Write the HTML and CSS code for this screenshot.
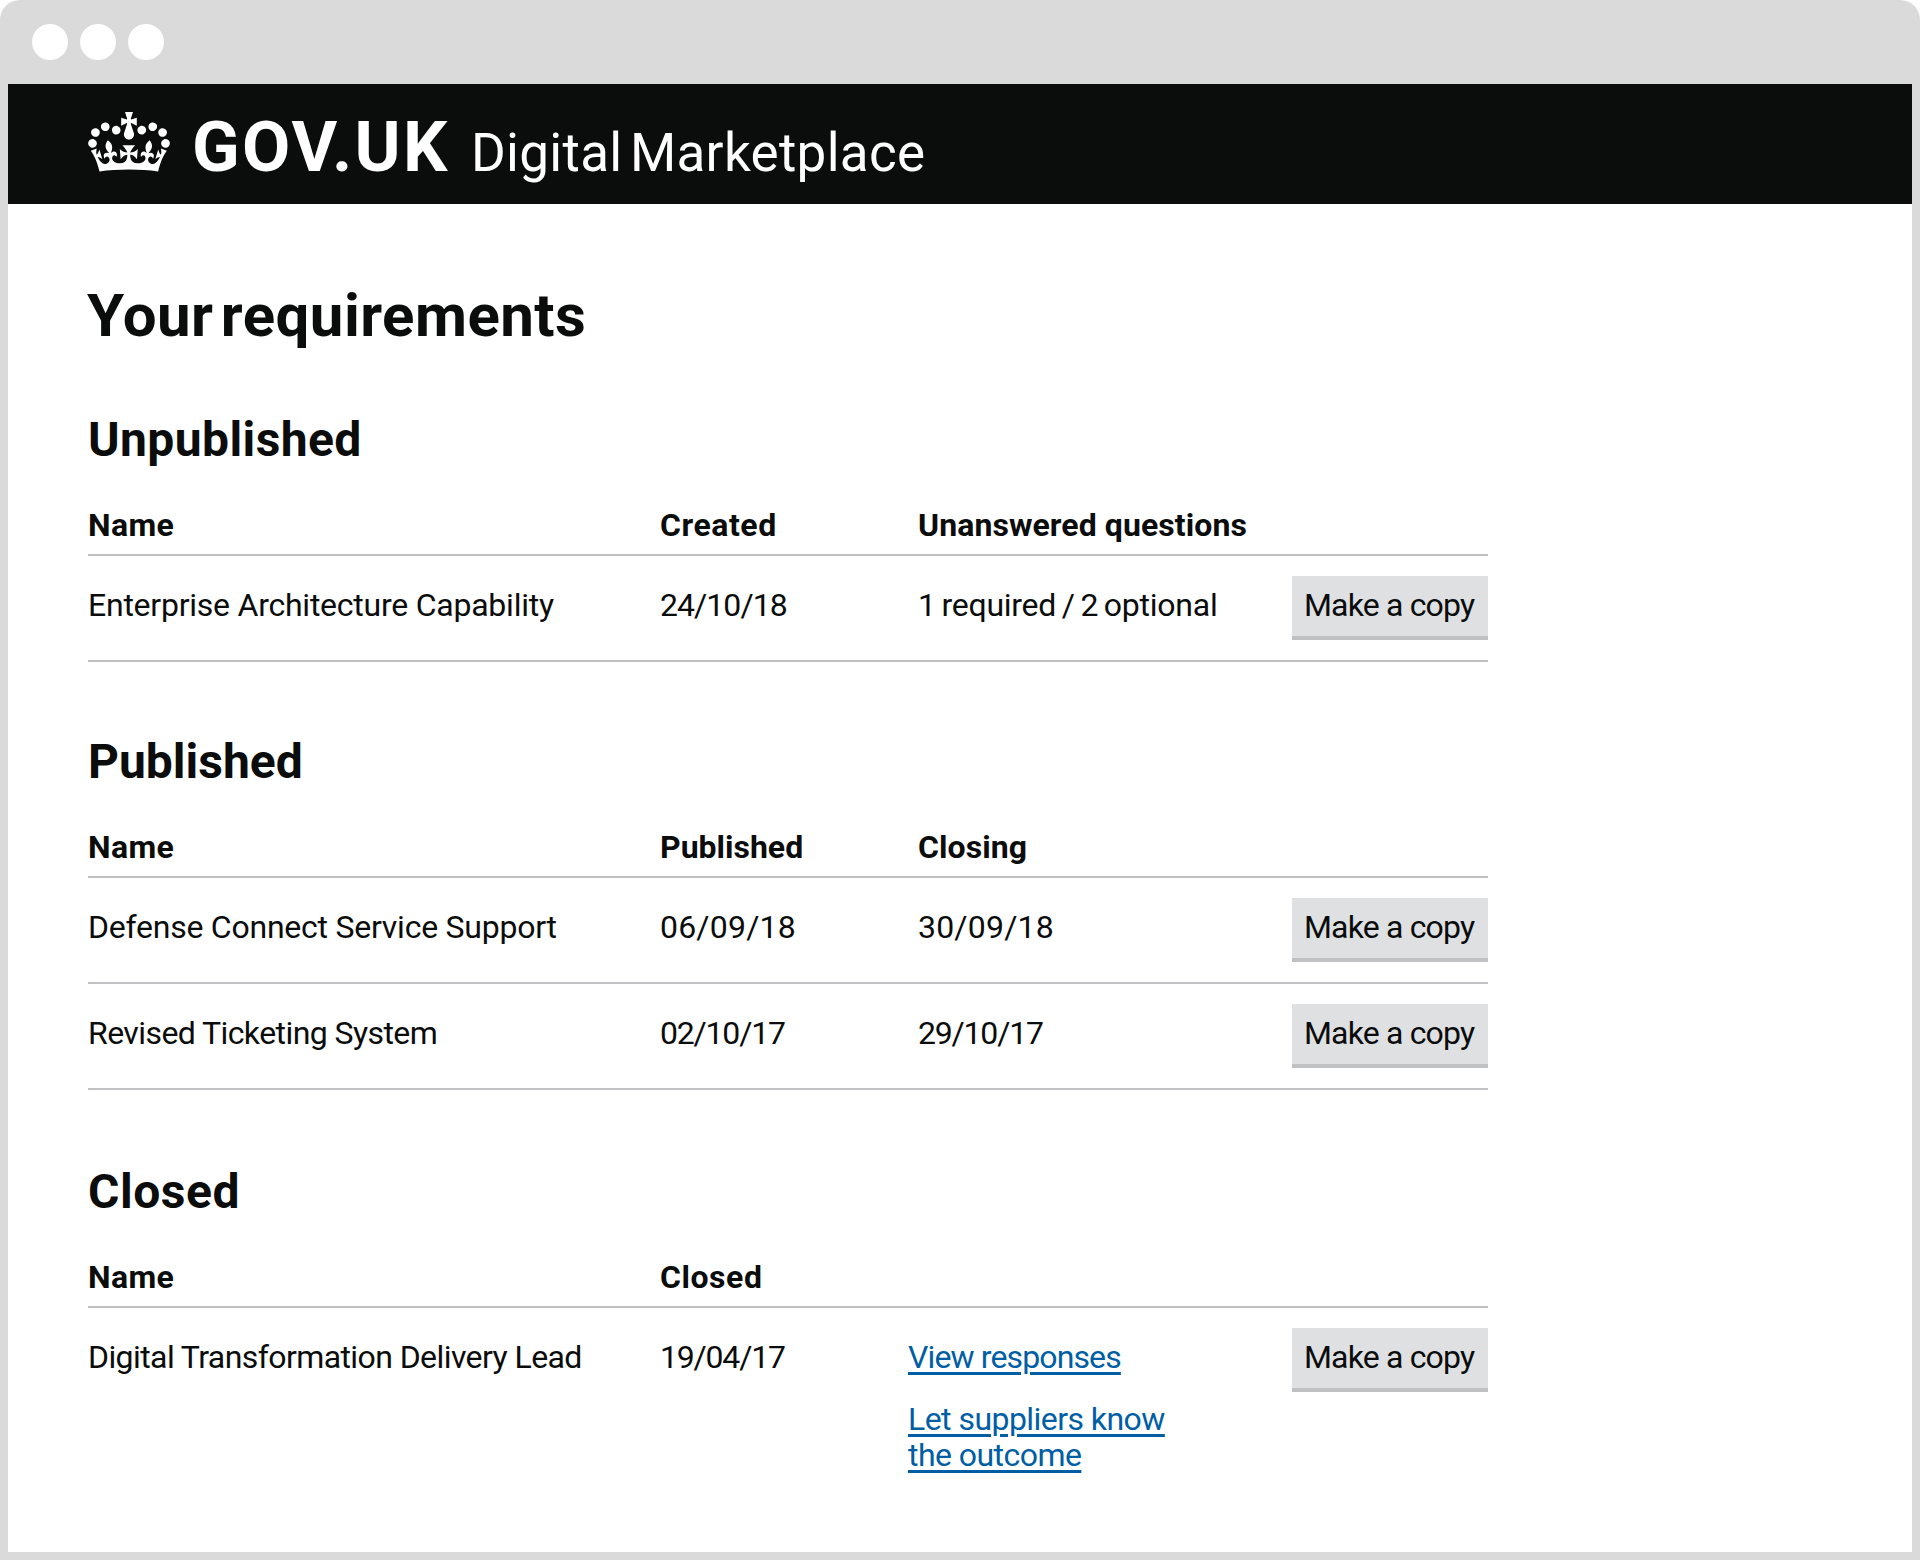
FILE: index.html
```html
<!DOCTYPE html>
<html lang="en">
<head>
<meta charset="utf-8">
<title>Your requirements – Digital Marketplace – GOV.UK</title>
<link rel="stylesheet" href="styles.css">
</head>
<body>
<div class="window">
  <div class="window-bar">
    <span class="window-dot"></span>
    <span class="window-dot"></span>
    <span class="window-dot"></span>
  </div>
  <div class="page">
    <header class="header">
      <svg class="crown" viewBox="0 0 132 97" aria-hidden="true">
        <path fill="currentColor" fill-rule="evenodd" d="M25 30.2c3.5 1.5 7.7-.2 9.1-3.7 1.5-3.6-.2-7.8-3.9-9.2-3.6-1.4-7.6.3-9.1 3.9-1.4 3.5.3 7.5 3.9 9zM9 39.5c3.6 1.5 7.8-.2 9.2-3.7 1.5-3.6-.2-7.8-3.9-9.1-3.6-1.5-7.6.2-9.1 3.8-1.4 3.5.3 7.5 3.8 9zM4.4 57.2c3.5 1.5 7.7-.2 9.1-3.8 1.5-3.6-.2-7.7-3.9-9.1-3.5-1.5-7.6.3-9.1 3.8-1.4 3.5.3 7.6 3.9 9.1zm38.3-21.4c3.5 1.5 7.7-.2 9.1-3.8 1.5-3.6-.2-7.7-3.9-9.1-3.6-1.5-7.6.3-9.1 3.8-1.3 3.6.4 7.7 3.9 9.1zm64.4-5.6c-3.6 1.5-7.8-.2-9.1-3.7-1.5-3.6.2-7.8 3.8-9.2 3.6-1.4 7.7.3 9.2 3.9 1.3 3.5-.4 7.5-3.9 9zm15.9 9.3c-3.6 1.5-7.7-.2-9.1-3.7-1.5-3.6.2-7.8 3.7-9.1 3.6-1.5 7.7.2 9.2 3.8 1.5 3.5-.3 7.5-3.8 9zm4.7 17.7c-3.6 1.5-7.8-.2-9.2-3.8-1.5-3.6.2-7.7 3.9-9.1 3.6-1.5 7.7.3 9.2 3.8 1.3 3.5-.4 7.6-3.9 9.1zM89.3 35.8c-3.6 1.5-7.8-.2-9.2-3.8-1.4-3.6.2-7.7 3.9-9.1 3.6-1.5 7.7.3 9.2 3.8 1.4 3.6-.3 7.7-3.9 9.1zM69.7 17.7l8.9 4.7V9.3l-8.9 2.8c-.2-.3-.5-.6-.9-.9L72.4 0H59.6l3.5 11.2c-.3.3-.6.5-.9.9l-8.8-2.8v13.1l8.8-4.7c.3.3.6.7.9.9l-5 15.4v.1c-.2.8-.4 1.6-.4 2.4 0 4.1 3.1 7.5 7 8.1h.2c.3 0 .7.1 1 .1.4 0 .7 0 1-.1h.2c4-.6 7.1-4.1 7.1-8.1 0-.8-.1-1.7-.4-2.4V34l-5.1-15.4c.4-.2.7-.6 1-.9zM66 92.8c16.9 0 32.8 1.1 47.1 3.2 4-16.9 8.9-26.7 14-33.5l-9.6-3.4c1 4.9 1.1 7.2 0 10.2-1.5-1.4-3-4.3-4.2-8.7L108.6 76c2.8-2 5-3.2 7.5-3.3-4.4 9.4-10 11.9-13.6 11.2-4.3-.8-6.3-4.6-5.6-7.9 1-4.7 5.7-5.9 8-.5 4.3-8.7-3-11.4-7.6-8.8 7.1-7.2 7.9-13.5 2.1-21.1-8 6.1-8.1 12.3-4.5 20.8-4.7-5.4-12.1-2.5-9.5 6.2 3.4-5.2 7.9-2 7.2 3.1-.6 4.3-6.4 7.8-13.5 7.2-10.3-.9-10.9-8-11.2-13.8 2.5-.5 7.1 1.8 11 7.3L80.2 60c-4.1 4.4-8 5.3-12.3 5.4 1.4-4.4 8-11.6 8-11.6H55.5s6.4 7.2 7.9 11.6c-4.2-.1-8-1-12.3-5.4l1.4 16.4c3.9-5.5 8.5-7.7 10.9-7.3-.3 5.8-.9 12.8-11.1 13.8-7.2.6-12.9-2.9-13.5-7.2-.7-5 3.8-8.3 7.1-3.1 2.7-8.7-4.6-11.6-9.4-6.2 3.7-8.5 3.6-14.7-4.6-20.8-5.8 7.6-5 13.9 2.2 21.1-4.7-2.6-11.9.1-7.7 8.8 2.3-5.5 7.1-4.2 8.1.5.7 3.3-1.3 7.1-5.7 7.9-3.5.7-9-1.8-13.5-11.2 2.5.1 4.7 1.3 7.5 3.3l-4.7-15.4c-1.2 4.4-2.7 7.2-4.3 8.7-1.1-3-.9-5.3 0-10.2l-9.5 3.4c5 6.9 9.9 16.7 14 33.5 14.8-2.1 30.8-3.2 47.7-3.2z"/>
      </svg>
      <div class="brand">
        <span class="brand-name">GOV.UK</span>
        <span class="brand-service">Digital Marketplace</span>
      </div>
    </header>

    <main class="main">
      <h1 class="title">Your requirements</h1>

      <section class="group group-unpublished">
        <h2 class="group-title">Unpublished</h2>
        <table class="table">
          <colgroup><col class="col-name"><col class="col-date"><col class="col-info"><col class="col-action"></colgroup>
          <thead>
            <tr><th class="name">Name</th><th class="wide">Created</th><th class="info">Unanswered questions</th><th></th></tr>
          </thead>
          <tbody>
            <tr>
              <td class="even">Enterprise Architecture Capability</td>
              <td class="date">24/10/18</td>
              <td class="info count">1 required / 2 optional</td>
              <td class="action"><button class="button" type="button">Make a copy</button></td>
            </tr>
          </tbody>
        </table>
      </section>

      <section class="group">
        <h2 class="group-title">Published</h2>
        <table class="table">
          <colgroup><col class="col-name"><col class="col-date"><col class="col-info"><col class="col-action"></colgroup>
          <thead>
            <tr><th class="name">Name</th><th>Published</th><th class="info">Closing</th><th></th></tr>
          </thead>
          <tbody>
            <tr>
              <td class="even">Defense Connect Service Support</td>
              <td class="date date-open">06/09/18</td>
              <td class="info date date-open">30/09/18</td>
              <td class="action"><button class="button" type="button">Make a copy</button></td>
            </tr>
            <tr>
              <td>Revised Ticketing System</td>
              <td class="date date-tight">02/10/17</td>
              <td class="info date date-tight">29/10/17</td>
              <td class="action"><button class="button" type="button">Make a copy</button></td>
            </tr>
          </tbody>
        </table>
      </section>

      <section class="group group-closed">
        <h2 class="group-title">Closed</h2>
        <table class="table">
          <colgroup><col class="col-name"><col class="col-date"><col class="col-info"><col class="col-action"></colgroup>
          <thead>
            <tr><th class="name">Name</th><th class="wide">Closed</th><th></th><th></th></tr>
          </thead>
          <tbody>
            <tr>
              <td>Digital Transformation Delivery Lead</td>
              <td class="date date-tight">19/04/17</td>
              <td class="links">
                <a class="link link-tight" href="#">View responses</a>
                <a class="link" href="#">Let suppliers know the outcome</a>
              </td>
              <td class="action"><button class="button" type="button">Make a copy</button></td>
            </tr>
          </tbody>
        </table>
      </section>
    </main>
  </div>
</div>
</body>
</html>
```
FILE: styles.css
```css
* {
  box-sizing: border-box;
}

body {
  margin: 0;
  background: #fff;
  color: #0b0c0c;
  font-family: Roboto, "Liberation Sans", sans-serif;
  font-size: 32px;
  line-height: 40px;
}

/* Browser frame */
.window {
  display: flex;
  flex-direction: column;
  height: 1560px;
  padding: 0 8px 8px;
  background: #dadada;
  border-radius: 20px 20px 0 0;
}

.window-bar {
  display: flex;
  flex: none;
  align-items: center;
  gap: 12px;
  height: 84px;
  padding-left: 24px;
}

.window-dot {
  width: 36px;
  height: 36px;
  border-radius: 50%;
  background: #fff;
}

.page {
  flex: 1;
  background: #fff;
}

/* Header */
.header {
  display: flex;
  align-items: flex-start;
  height: 120px;
  padding: 22px 80px 0;
  background: #0b0c0c;
  color: #fff;
}

.crown {
  width: 82px;
  height: 60px;
  margin-top: 6px;
}

.brand {
  display: flex;
  align-items: baseline;
  margin: 1px 0 0 22px;
}

.brand-name {
  width: 279px;
  font-size: 70px;
  line-height: 80px;
  font-weight: 700;
  letter-spacing: 2.2px;
}

.brand-service {
  font-size: 53px;
  letter-spacing: 0.3px;
  word-spacing: -6px;
}

/* Content */
.main {
  padding: 80px 80px 0;
}

.title {
  margin: 0 0 0 -1px;
  font-size: 60px;
  line-height: 64px;
  font-weight: 700;
  letter-spacing: 0.45px;
  word-spacing: -8px;
}

.group {
  margin-top: 70px;
}

.group-unpublished {
  margin-top: 62px;
}

.group-closed {
  margin-top: 72px;
}

.group-title {
  margin: 0;
  font-size: 48px;
  line-height: 60px;
  font-weight: 700;
}

.group-unpublished .group-title {
  letter-spacing: 0.4px;
}

.group-closed .group-title {
  letter-spacing: 0.55px;
}

/* Tables */
.table {
  width: 1400px;
  table-layout: fixed;
  border-collapse: separate;
  border-spacing: 0;
}

.col-name { width: 572px; }
.col-date { width: 248px; }
.col-info { width: 384px; }
.col-action { width: 196px; }

.table th {
  height: 86px;
  padding: 35px 0 9px;
  border-bottom: 2px solid #bfc1c3;
  font-weight: 700;
  text-align: left;
  vertical-align: top;
}

.table th.name {
  letter-spacing: 0.35px;
}

.table th.wide {
  letter-spacing: 0.55px;
}

.table th.info {
  padding-left: 10px;
  letter-spacing: 0.08px;
}

.table td {
  height: 106px;
  padding: 29px 0 0;
  border-bottom: 2px solid #bfc1c3;
  vertical-align: top;
  white-space: nowrap;
  letter-spacing: -0.58px;
}

.group-closed .table td {
  border-bottom: 0;
}

.table td.even {
  letter-spacing: -0.24px;
}

.table td.info {
  padding-left: 10px;
}

.table td.count {
  letter-spacing: -0.25px;
  word-spacing: -2px;
}

.table td.date {
  letter-spacing: -0.95px;
}

.table td.date-open {
  letter-spacing: 0.2px;
}

.table td.date-tight {
  letter-spacing: -1.2px;
}

.table td.action {
  padding-top: 20px;
}

.button {
  display: block;
  width: 196px;
  height: 64px;
  padding: 0 0 2px 12px;
  border: 0;
  border-bottom: 4px solid #bfc1c3;
  border-radius: 0;
  background: #dee0e2;
  color: #0b0c0c;
  font: inherit;
  line-height: 58px;
  text-align: left;
  letter-spacing: -0.83px;
}

.table td.links {
  padding-top: 31px;
  white-space: normal;
}

.link {
  display: block;
  width: 280px;
  color: #005ea5;
  line-height: 36px;
  letter-spacing: -0.55px;
  text-decoration: underline;
  text-decoration-thickness: 3px;
  text-underline-offset: 4px;
}

.link-tight {
  letter-spacing: -0.87px;
}

.link + .link {
  margin-top: 26px;
}
```
